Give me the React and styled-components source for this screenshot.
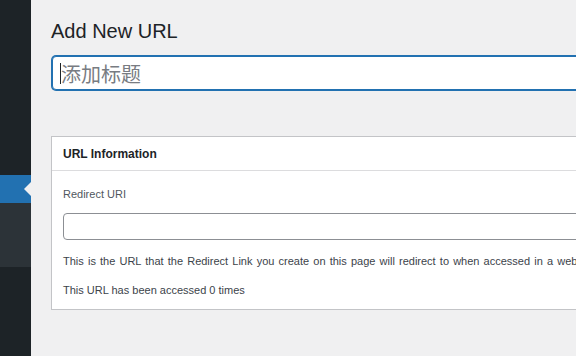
import React, { useEffect, useRef } from "react";
import styled, { createGlobalStyle } from "styled-components";

const GlobalStyle = createGlobalStyle`
  html, body {
    margin: 0;
    padding: 0;
    background: #f0f0f1;
    overflow: clip;
  }
  body {
    font-family: "Liberation Sans", Arial, sans-serif;
  }
`;

const Screen = styled.div`
  display: flex;
  width: 576px;
  height: 356px;
  overflow: clip;
  background: #f0f0f1;
`;

const Sidebar = styled.nav`
  flex: 0 0 31px;
  display: flex;
  flex-direction: column;
  background: #1d2327;
`;

const MenuSpacer = styled.div`
  height: ${(p) => p.$h}px;
`;

const CurrentItem = styled.div`
  position: relative;
  height: 28px;
  background: #2271b1;
  &::after {
    content: "";
    position: absolute;
    right: 0;
    top: 50%;
    margin-top: -7px;
    border-top: 7px solid transparent;
    border-bottom: 7px solid transparent;
    border-right: 7px solid #f0f0f1;
  }
`;

const Submenu = styled.div`
  height: 64px;
  background: #2c3338;
`;

const Main = styled.main`
  flex: 1 1 auto;
  min-width: 0;
  overflow: clip;
  padding-left: 20px;
`;

const Wrap = styled.div`
  width: 600px;
  display: flex;
  flex-direction: column;
`;

const Title = styled.h1`
  margin: 18px 0 0;
  font-family: "Liberation Sans", Arial, sans-serif;
  font-size: 20px;
  font-weight: 400;
  line-height: 26px;
  color: #1d2327;
`;

const TitleField = styled.div`
  position: relative;
  display: flex;
  margin: 12px 0 0 1px;
  &::after {
    content: "";
    position: absolute;
    left: 8px;
    top: 7px;
    width: 1px;
    height: 21px;
    background: #1d2327;
    pointer-events: none;
  }
`;

const TitleInput = styled.input`
  box-sizing: border-box;
  flex: 1;
  height: 34px;
  padding: 0 8px 0 8px;
  border: 1px solid #2271b1;
  border-radius: 4px;
  box-shadow: 0 0 0 1px #2271b1;
  background: #fff;
  outline: none;
  font-family: "Noto Sans CJK SC", "Liberation Sans", sans-serif;
  font-size: 20px;
  color: #1d2327;
  caret-color: transparent;
  &::placeholder {
    color: #787c82;
  }
`;

const Postbox = styled.section`
  margin-top: 46px;
  border: 1px solid #c3c4c7;
  background: #fff;
`;

const PostboxHeader = styled.h2`
  margin: 0;
  padding: 0 11px;
  height: 33px;
  line-height: 34px;
  border-bottom: 1px solid #dcdcde;
  font-family: "Liberation Sans", Arial, sans-serif;
  font-size: 12px;
  font-weight: 700;
  color: #1d2327;
`;

const PostboxBody = styled.div`
  display: flex;
  flex-direction: column;
  padding: 15px 11px 11px;
`;

const Label = styled.label`
  font-size: 11px;
  line-height: 16px;
  color: #50575e;
`;

const UrlInput = styled.input`
  box-sizing: border-box;
  margin-top: 11px;
  height: 27px;
  border: 1px solid #8c8f94;
  border-radius: 4px;
  background: #fff;
  outline: none;
`;

const Text = styled.p`
  margin: ${(p) => p.$mt}px 0 0;
  font-size: 11px;
  line-height: 16px;
  word-spacing: ${(p) => (p.$spread ? "1.1px" : "0")};
  color: #3c434a;
  white-space: nowrap;
`;

export default function App() {
  const titleRef = useRef(null);
  useEffect(() => {
    if (titleRef.current) titleRef.current.focus({ preventScroll: true });
  }, []);
  return (
    <>
      <GlobalStyle />
      <Screen>
        <Sidebar>
          <MenuSpacer $h={175} />
          <CurrentItem />
          <Submenu />
        </Sidebar>
        <Main>
          <Wrap>
            <Title>Add New URL</Title>
            <TitleField>
              <TitleInput ref={titleRef} placeholder="添加标题" />
            </TitleField>
            <Postbox>
              <PostboxHeader>URL Information</PostboxHeader>
              <PostboxBody>
                <Label>Redirect URI</Label>
                <UrlInput />
                <Text $mt={13} $spread>
                  This is the URL that the Redirect Link you create on this page will redirect to when accessed in a web browser.
                </Text>
                <Text $mt={13}>This URL has been accessed 0 times</Text>
              </PostboxBody>
            </Postbox>
          </Wrap>
        </Main>
      </Screen>
    </>
  );
}
